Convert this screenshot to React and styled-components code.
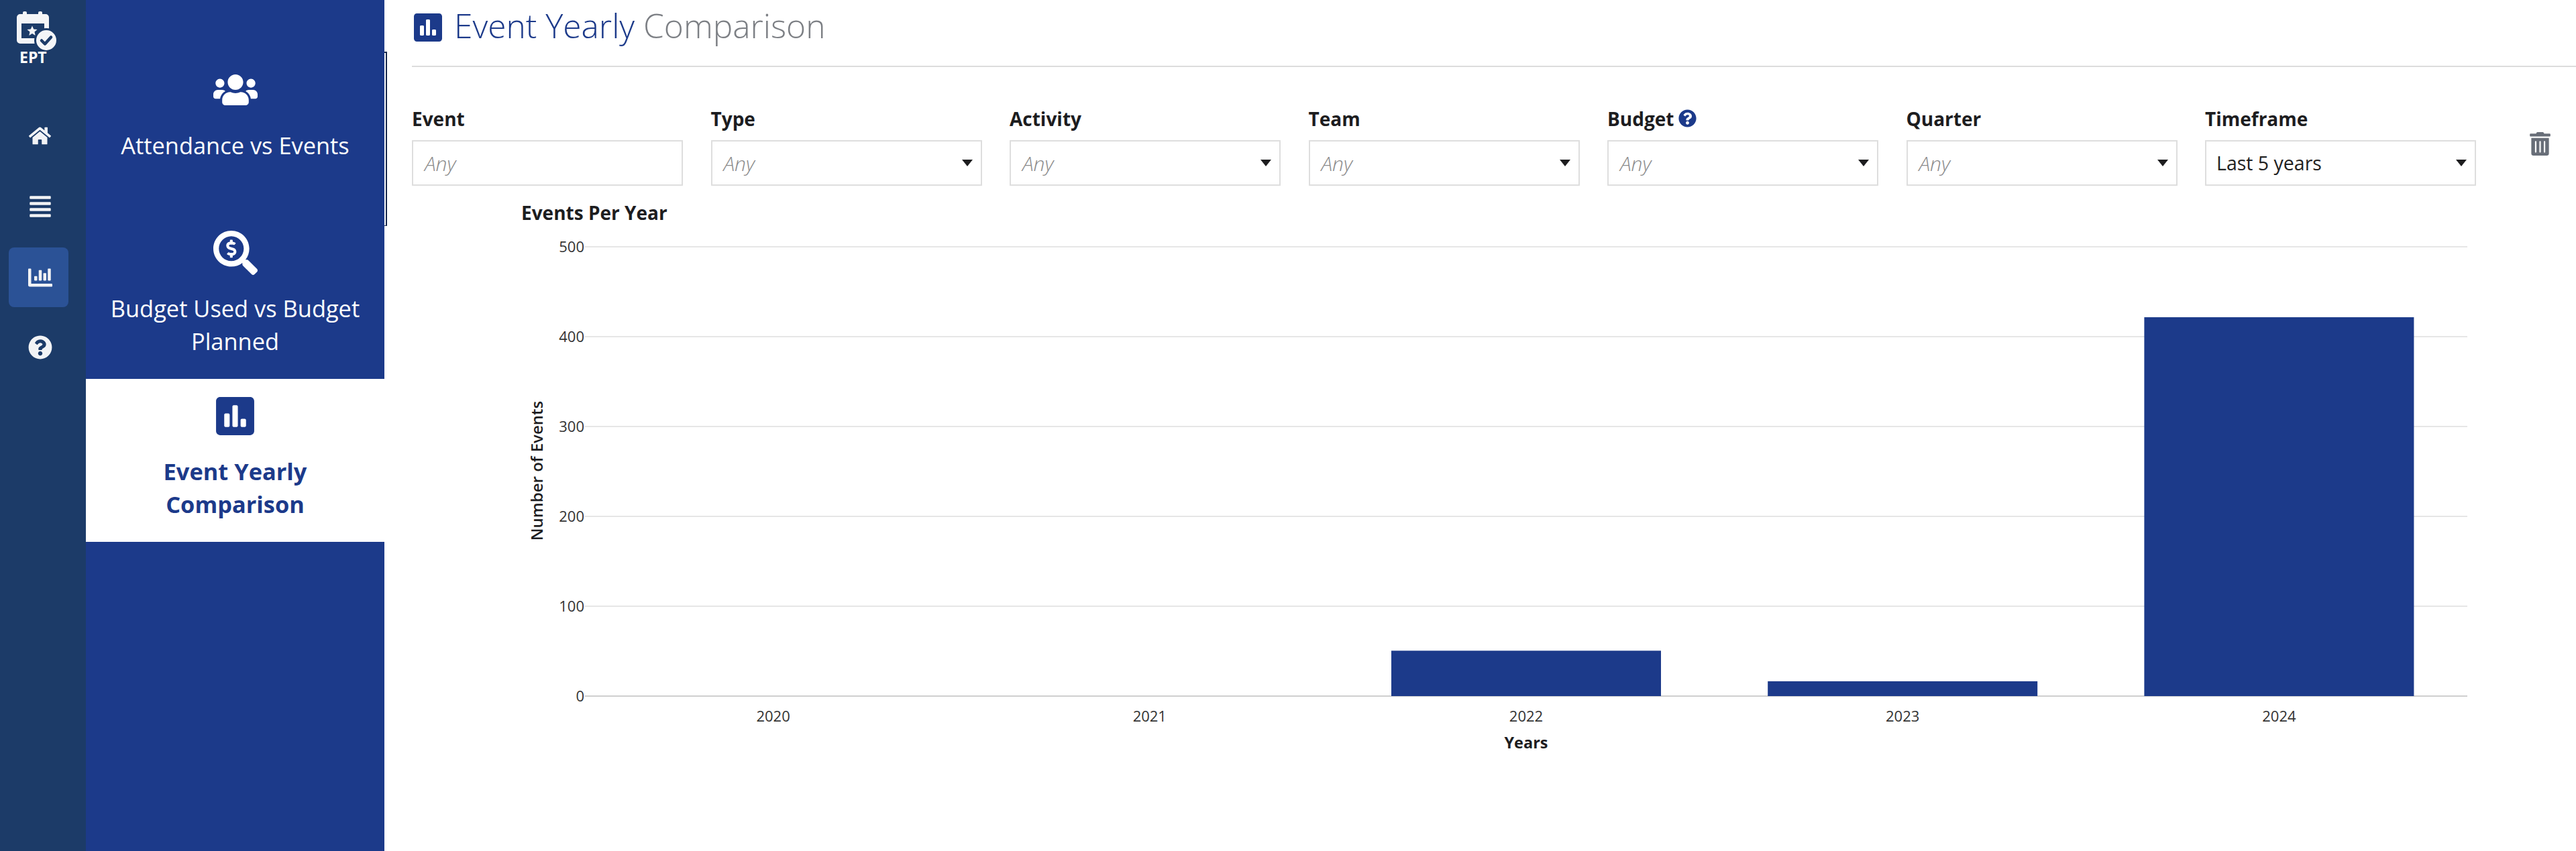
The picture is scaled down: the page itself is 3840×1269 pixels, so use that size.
import React from 'react';
import styled, { createGlobalStyle } from 'styled-components';
import { FaUsers, FaHome, FaAlignJustify, FaChartBar, FaQuestionCircle, FaSearchDollar, FaPoll, FaTrashAlt } from 'react-icons/fa';

const NAVY = '#1c3a8a';
const RAIL = '#1c3b68';

const Global = createGlobalStyle`
  html, body { margin: 0; padding: 0; background: #fff; }
  body { font-family: "Open Sans", "Liberation Sans", sans-serif; }
  * { box-sizing: border-box; }
`;

const Page = styled.div`
  display: flex;
  height: 1269px;
  width: 3840px;
  overflow: hidden;
`;

const Rail = styled.nav`
  width: 128px;
  flex: none;
  background: ${RAIL};
  display: flex;
  flex-direction: column;
  align-items: flex-start;
  padding-left: 13px;
  color: #f2f3f5;
`;

const Logo = styled.div`
  width: 89px;
  height: 177px;
  padding: 17px 0 0 12px;
  display: flex;
  flex-direction: column;
`;

const LogoText = styled.span`
  font-size: 23px;
  font-weight: 700;
  line-height: 24px;
  margin: -8px 0 0 4px;
  color: #fff;
`;

const RailItem = styled.div`
  width: 89px;
  height: ${(p) => p.$h}px;
  margin-bottom: ${(p) => p.$mb || 0}px;
  border-radius: 8px;
  background: ${(p) => (p.$active ? '#2b5296' : 'transparent')};
  display: flex;
  align-items: center;
  justify-content: center;
  padding-left: 4px;
  font-size: ${(p) => p.$size || 36}px;
`;

const Panel = styled.aside`
  position: relative;
  width: 445px;
  flex: none;
  background: ${NAVY};
  padding-top: 79px;
`;

const ScrollMark = styled.div`
  position: absolute;
  left: 445px;
  top: 77px;
  width: 4px;
  height: 260px;
  background: #fff;
  border-top: 2px solid #1a2a4e;
  border-right: 2px solid #1a2a4e;
  border-bottom: 1px solid #1a2a4e;
`;

const Tab = styled.div`
  height: 243px;
  padding: 22px 30px 0;
  display: flex;
  flex-direction: column;
  align-items: center;
  text-align: center;
  background: ${(p) => (p.$active ? '#fff' : 'transparent')};
  color: ${(p) => (p.$active ? NAVY : '#fff')};
`;

const TabIcon = styled.div`
  height: 66px;
  display: flex;
  align-items: center;
  justify-content: center;
  font-size: ${(p) => p.$size}px;
`;

const TabText = styled.div`
  margin-top: 25px;
  font-size: 34.4px;
  line-height: 49px;
  font-weight: ${(p) => (p.$active ? 700 : 400)};
`;

const Main = styled.main`
  flex: 1;
  min-width: 0;
  padding-left: 41px;
`;

const Header = styled.header`
  height: 100px;
  border-bottom: 2px solid #dcdcdc;
  display: flex;
  align-items: flex-start;
  padding-top: 2px;
  gap: 15px;
`;

const HeaderIcon = styled.div`
  height: 78px;
  display: flex;
  align-items: center;
  font-size: 48px;
  color: ${NAVY};
`;

const Title = styled.h1`
  margin: 0;
  font-size: 49.6px;
  line-height: 73px;
  font-weight: 300;
  color: #7c7f84;
  white-space: nowrap;
`;

const TitleStrong = styled.span`
  color: ${NAVY};
`;

const Filters = styled.section`
  display: flex;
  gap: 41.5px;
  padding-top: 59px;
  position: relative;
`;

const Field = styled.div`
  width: 404px;
  flex: none;
`;

const Label = styled.label`
  display: flex;
  align-items: center;
  gap: 7px;
  height: 35px;
  margin-bottom: 15px;
  font-size: 28px;
  font-weight: 700;
  color: #1d1d1f;
`;

const HelpMark = styled.span`
  display: inline-flex;
  font-size: 27px;
  color: ${NAVY};
`;

const Select = styled.div`
  height: 68px;
  border: 2px solid #dedede;
  display: flex;
  align-items: center;
  justify-content: space-between;
  padding: 0 12px 0 ${(p) => (p.$any ? 17 : 15)}px;
  font-size: ${(p) => (p.$any ? 30 : 28.5)}px;
  font-weight: ${(p) => (p.$any ? 300 : 400)};
  font-style: ${(p) => (p.$any ? 'italic' : 'normal')};
  color: ${(p) => (p.$any ? '#8a8a8a' : '#222')};
`;

const Caret = styled.span`
  width: 0;
  height: 0;
  border-left: 8px solid transparent;
  border-right: 8px solid transparent;
  border-top: 10px solid #1d1d1f;
`;

const Trash = styled.div`
  position: absolute;
  left: 3155px;
  top: 97px;
  font-size: 35px;
  line-height: 0;
  color: #686e78;
`;

const ChartWrap = styled.div`
  margin-top: 15px;
`;

const ChartText = styled.text`
  font-family: "Open Sans", "Liberation Sans", sans-serif;
  font-size: ${(p) => p.$size || 22}px;
  font-weight: ${(p) => p.$weight || 400};
  fill: ${(p) => p.$fill || '#333'};
`;

function BarChart() {
  // coordinates are relative to the svg, which starts at x=614, y=292
  const ox = 614;
  const oy = 292;
  const left = 872 - ox;
  const right = 3678 - ox;
  const top = 368 - oy;
  const bottom = 1038 - oy;
  const step = (bottom - top) / 5;
  const cat = (right - left) / 5;
  const barW = 402;
  const data = [
    { y: '2020', v: 0 },
    { y: '2021', v: 0 },
    { y: '2022', v: 50.5 },
    { y: '2023', v: 16.5 },
    { y: '2024', v: 421.6 },
  ];
  return (
    <svg width="3100" height="860" viewBox="0 0 3100 860" role="img" aria-label="Events Per Year">
      <ChartText x={777 - ox} y={318 - oy + 10} $size={28} $weight={700} $fill="#1d1d1f">Events Per Year</ChartText>
      {[500, 400, 300, 200, 100, 0].map((t, i) => (
        <g key={t}>
          <line x1={left} x2={right} y1={top + i * step} y2={top + i * step} stroke={t === 0 ? '#cfcfcf' : '#e6e6e6'} strokeWidth="2" />
          <ChartText x={left - 1} y={top + i * step + 8} textAnchor="end">{t}</ChartText>
        </g>
      ))}
      {data.map((d, i) => {
        const cx = left + cat * (i + 0.5);
        const h = (d.v / 500) * (bottom - top);
        return (
          <g key={d.y}>
            {d.v > 0 && <rect x={cx - barW / 2} y={bottom - h} width={barW} height={h} fill={NAVY} />}
            <ChartText x={cx} y={bottom + 38} textAnchor="middle">{d.y}</ChartText>
          </g>
        );
      })}
      <ChartText x={(left + right) / 2} y={1107 - oy + 9} textAnchor="middle" $weight={700} $size={23.5} $fill="#1d1d1f">Years</ChartText>
      <ChartText transform={`translate(${801 - ox + 8} ${702 - oy}) rotate(-90)`} textAnchor="middle" $weight={600} $size={24} $fill="#1d1d1f">Number of Events</ChartText>
    </svg>
  );
}

function LogoMark() {
  return (
    <svg width="64" height="64" viewBox="0 0 64 64" aria-hidden="true">
      <g fill="#f4f5f7">
        <rect x="9" y="0" width="6" height="10" rx="2" />
        <rect x="32" y="0" width="6" height="10" rx="2" />
        <path fillRule="evenodd" d="M5 4h38a5 5 0 0 1 5 5v34a5 5 0 0 1-5 5H5a5 5 0 0 1-5-5V9a5 5 0 0 1 5-5zM7 18v22h34V18z" />
        <path d="M23 21.500l2.200 5 5.400.5-4.100 3.600 1.200 5.300-4.700-2.800-4.700 2.800 1.200-5.300-4.100-3.600 5.400-.5z" />
      </g>
      <circle cx="44" cy="43" r="18" fill={RAIL} />
      <circle cx="44" cy="43" r="15" fill="#f4f5f7" />
      <path d="M37 43.500l5 5 9-10" fill="none" stroke={RAIL} strokeWidth="4.500" strokeLinecap="round" strokeLinejoin="round" />
    </svg>
  );
}

const filters = [
  { label: 'Event', value: 'Any', caret: false },
  { label: 'Type', value: 'Any', caret: true },
  { label: 'Activity', value: 'Any', caret: true },
  { label: 'Team', value: 'Any', caret: true },
  { label: 'Budget', value: 'Any', caret: true, help: true },
  { label: 'Quarter', value: 'Any', caret: true },
  { label: 'Timeframe', value: 'Last 5 years', caret: true },
];

export default function App() {
  return (
    <Page>
      <Global />
      <Rail>
        <Logo>
          <LogoMark />
          <LogoText>EPT</LogoText>
        </Logo>
        <RailItem $h={50} $mb={56} $size={33}><FaHome /></RailItem>
        <RailItem $h={50} $mb={36}><FaAlignJustify /></RailItem>
        <RailItem $h={89} $mb={35} $active><FaChartBar /></RailItem>
        <RailItem $h={50}><FaQuestionCircle /></RailItem>
      </Rail>
      <Panel>
        <ScrollMark />
        <Tab>
          <TabIcon $size={66}><FaUsers /></TabIcon>
          <TabText>Attendance vs Events</TabText>
        </Tab>
        <Tab>
          <TabIcon $size={66}><FaSearchDollar /></TabIcon>
          <TabText>Budget Used vs Budget Planned</TabText>
        </Tab>
        <Tab $active>
          <TabIcon $size={65}><FaPoll /></TabIcon>
          <TabText $active>Event Yearly Comparison</TabText>
        </Tab>
      </Panel>
      <Main>
        <Header>
          <HeaderIcon><FaPoll /></HeaderIcon>
          <Title><TitleStrong>Event Yearly</TitleStrong> Comparison</Title>
        </Header>
        <Filters>
          {filters.map((f) => (
            <Field key={f.label}>
              <Label>
                {f.label}
                {f.help && <HelpMark><FaQuestionCircle /></HelpMark>}
              </Label>
              <Select $any={f.value === 'Any'}>
                {f.value}
                {f.caret && <Caret />}
              </Select>
            </Field>
          ))}
          <Trash><FaTrashAlt /></Trash>
        </Filters>
        <ChartWrap>
          <BarChart />
        </ChartWrap>
      </Main>
    </Page>
  );
}
